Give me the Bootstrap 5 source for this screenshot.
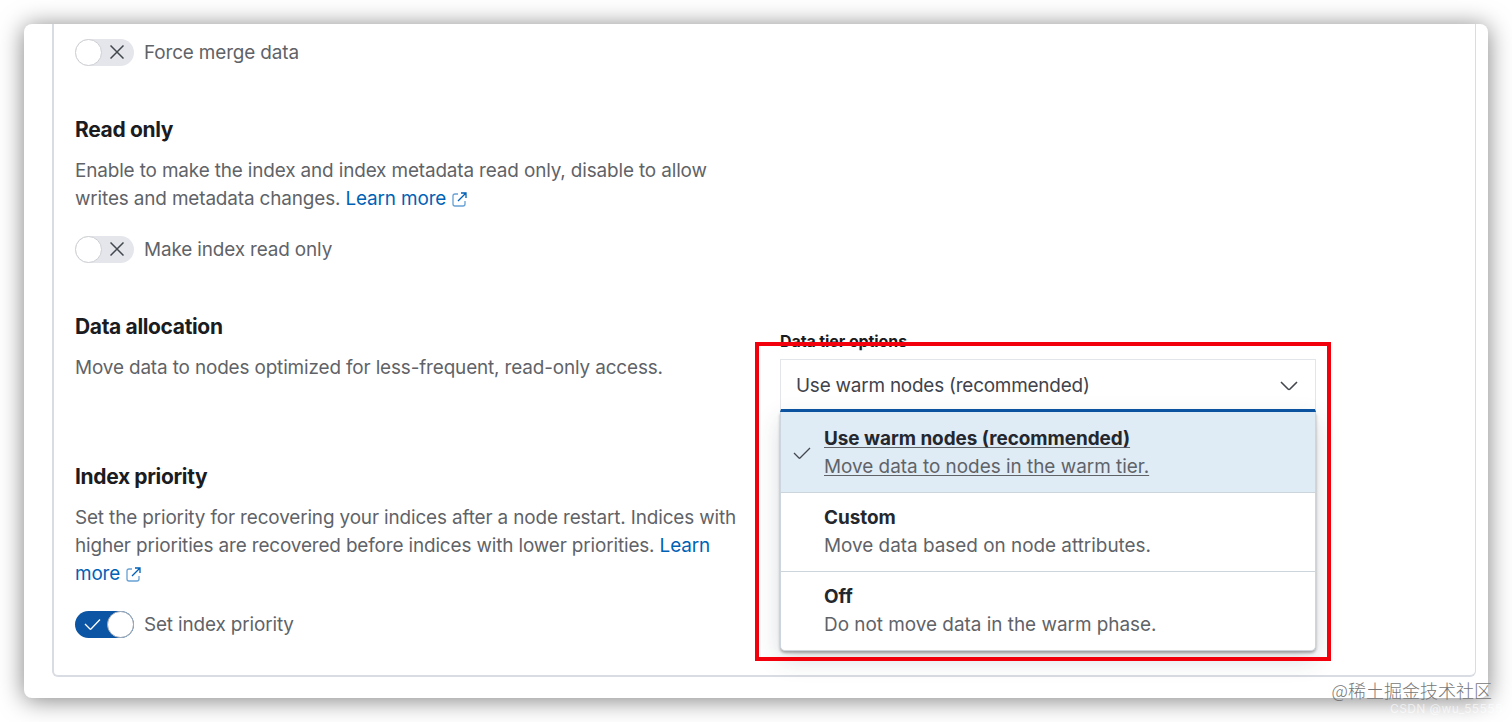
<!DOCTYPE html>
<html lang="en">
<head>
  <meta charset="UTF-8">
  <meta name="viewport" content="width=device-width, initial-scale=1.0">
  <title>Warm phase</title>
  <!-- Bootstrap CSS -->
  <link href="https://cdn.jsdelivr.net/npm/bootstrap@5.3.3/dist/css/bootstrap.min.css" rel="stylesheet">
  <style>
    body {
      font-family: Inter, "Noto Sans CJK SC", sans-serif;
      font-size: 18.9px;
      line-height: 28.1px;
      letter-spacing: -.13px;
      color: #5f6368;
      height: 722px;
      padding: 24px;
      overflow: hidden;
    }
    .window {
      height: 674px;
      border-radius: 8px;
      padding: 0 12px 21px 28px;
      box-shadow: 0 2px 24px rgba(0, 0, 0, .5);
    }
    .phase-panel {
      height: 653px;
      border: 2px solid #d9dce2;
      border-top: 0;
      border-right-width: 1px;
      border-radius: 0 0 6px 6px;
      padding: 14px 21px 0 21px;
    }
    .left-col { width: 668px; }
    .right-col { width: 536px; margin-left: 37px; padding-top: 19px; }
    .field-head {
      font-size: 21px;
      font-weight: 700;
      line-height: 31px;
      letter-spacing: -.35px;
      color: #1a1c21;
      margin: 0 0 12px;
    }
    .section-gap { margin-top: 48px; }
    .row-allocation { height: 150px; margin-top: 48px; }
    .learn { color: #0061b5; text-decoration: none; }
    .learn svg { margin-left: 1px; vertical-align: -2px; }

    /* switches */
    .toggle-row { height: 28px; gap: 10px; }
    .toggle-label { padding-top: 2px; }
    .after-text { margin-top: 22px; }
    .toggle-track {
      width: 59px;
      height: 27px;
      border-radius: 14px;
      background: #e4e6eb;
      padding: 0 10px 0 0;
    }
    .toggle-thumb {
      width: 27px;
      height: 27px;
      border-radius: 50%;
      background: #fff;
      border: 1.5px solid #cdcfd3;
    }
    .toggle-on { background: #0b55a4; padding: 0 0 0 9px; }
    .toggle-on .toggle-thumb { border-color: #a4acb5; }

    /* tier select */
    .tier-wrap { position: relative; }
    .tier-label {
      font-size: 16px;
      font-weight: 700;
      line-height: 23px;
      color: #1a1c21;
      letter-spacing: -.1px;
      margin-bottom: 6px;
    }
    .tier-select {
      height: 53px;
      border: 1px solid #e2e6eb;
      border-bottom: 3px solid #0b55a4;
      padding: 2px 17px 0 15px;
      letter-spacing: -.2px;
      color: #3f434b;
    }
    .tier-menu {
      position: absolute;
      top: 82px;
      left: 0;
      width: 536px;
      height: 239px;
      background: #fff;
      border: 1px solid #cdd5de;
      border-top: 0;
      border-radius: 0 0 5px 5px;
      letter-spacing: 0;
      box-shadow: 0 2px 3px rgba(0, 0, 0, .32), 0 8px 24px rgba(40, 55, 70, .18);
    }
    .tier-item { height: 79px; padding: 11px 0 0 12px; border-bottom: 1px solid #ccd4dc; }
    .tier-item:last-child { border-bottom: 0; }
    .tier-item b { color: #24272d; font-weight: 700; letter-spacing: -.03px; }
    .tier-check { width: 31px; padding-bottom: 12px; }
    .tier-active { background: #dfebf5; height: 81px; padding-top: 13px; text-decoration: underline; text-underline-offset: 2px; }
    .tier-mark {
      position: absolute;
      top: 12px;
      left: -25px;
      width: 576px;
      height: 319px;
      border: 4px solid #f2000b;
    }

    .site-mark {
      position: absolute;
      right: 20px;
      top: 678px;
      font-size: 18px;
      line-height: 24px;
      letter-spacing: 0;
      font-weight: 300;
      color: #777;
      font-family: "Noto Sans CJK SC", sans-serif;
    }
    .author-mark {
      position: absolute;
      left: 1390px;
      top: 701px;
      font-size: 12px;
      line-height: 16px;
      letter-spacing: .4px;
      color: rgba(255, 255, 255, .6);
    }
  </style>
</head>
<body>

  <div class="window bg-white">
    <div class="phase-panel">

      <!-- Force merge -->
      <div class="toggle-row d-flex align-items-center">
        <div class="toggle-track d-flex align-items-center justify-content-between">
          <span class="toggle-thumb"></span>
          <svg width="14" height="14" viewBox="0 0 14 14" fill="none" stroke="#43474e" stroke-width="1.5"><path d="M0.5 0.5L13.5 13.5M13.5 0.5L0.5 13.5"/></svg>
        </div>
        <span class="toggle-label">Force merge data</span>
      </div>

      <!-- Read only -->
      <div class="left-col section-gap">
        <h3 class="field-head">Read only</h3>
        <div>Enable to make the index and index metadata read only, disable to allow<br>writes and metadata changes. <a href="#" class="learn">Learn more <svg width="15" height="15" viewBox="0 0 15 15" fill="none" stroke="#0061b5" stroke-width="1.3"><path stroke-opacity=".6" d="M6 2H3Q1 2 1 4V12Q1 14 3 14H11Q13 14 13 12V9"/><path d="M9 1H14V6M14 1L6 9"/></svg></a></div>
        <div class="toggle-row after-text d-flex align-items-center">
          <div class="toggle-track d-flex align-items-center justify-content-between">
            <span class="toggle-thumb"></span>
            <svg width="14" height="14" viewBox="0 0 14 14" fill="none" stroke="#43474e" stroke-width="1.5"><path d="M0.5 0.5L13.5 13.5M13.5 0.5L0.5 13.5"/></svg>
          </div>
          <span class="toggle-label">Make index read only</span>
        </div>
      </div>

      <!-- Data allocation -->
      <div class="row-allocation d-flex">
        <div class="left-col">
          <h3 class="field-head">Data allocation</h3>
          <div>Move data to nodes optimized for less-frequent, read-only access.</div>
        </div>
        <div class="right-col">
          <div class="tier-wrap">
            <div class="tier-label">Data tier options</div>
            <div class="tier-select d-flex align-items-center justify-content-between">
              <span>Use warm nodes (recommended)</span>
              <svg width="18" height="10" viewBox="0 0 18 10" fill="none" stroke="#43474e" stroke-width="1.6"><path d="M1 1L8 8Q9 9 10 8L17 1"/></svg>
            </div>
            <div class="tier-menu">
              <div class="tier-item tier-active d-flex">
                <div class="tier-check d-flex align-items-center">
                  <svg width="18" height="14" viewBox="0 0 18 14" fill="none" stroke="#43474e" stroke-width="1.3"><path d="M1 7L6 12Q6.5 12.5 7 12L17 2"/></svg>
                </div>
                <div><b>Use warm nodes (recommended)</b><br>Move data to nodes in the warm tier.</div>
              </div>
              <div class="tier-item d-flex">
                <div class="tier-check"></div>
                <div><b>Custom</b><br>Move data based on node attributes.</div>
              </div>
              <div class="tier-item d-flex">
                <div class="tier-check"></div>
                <div><b>Off</b><br>Do not move data in the warm phase.</div>
              </div>
            </div>
            <div class="tier-mark"></div>
          </div>
        </div>
      </div>

      <!-- Index priority -->
      <div class="left-col">
        <h3 class="field-head">Index priority</h3>
        <div>Set the priority for recovering your indices after a node restart. Indices with<br>higher priorities are recovered before indices with lower priorities. <a href="#" class="learn">Learn<br>more <svg width="15" height="15" viewBox="0 0 15 15" fill="none" stroke="#0061b5" stroke-width="1.3"><path stroke-opacity=".6" d="M6 2H3Q1 2 1 4V12Q1 14 3 14H11Q13 14 13 12V9"/><path d="M9 1H14V6M14 1L6 9"/></svg></a></div>
        <div class="toggle-row after-text d-flex align-items-center">
          <div class="toggle-track toggle-on d-flex align-items-center justify-content-between">
            <svg width="17" height="13" viewBox="0 0 17 13" fill="none" stroke="#fff" stroke-width="1.3"><path d="M1 6L6 11Q6.5 11.5 7 11L16 1.5"/></svg>
            <span class="toggle-thumb"></span>
          </div>
          <span class="toggle-label">Set index priority</span>
        </div>
      </div>

    </div>
  </div>

  <div class="site-mark">@稀土掘金技术社区</div>
  <div class="author-mark">CSDN @wu_55555</div>

  <script src="https://cdn.jsdelivr.net/npm/bootstrap@5.3.3/dist/js/bootstrap.bundle.min.js"></script>
</body>
</html>
